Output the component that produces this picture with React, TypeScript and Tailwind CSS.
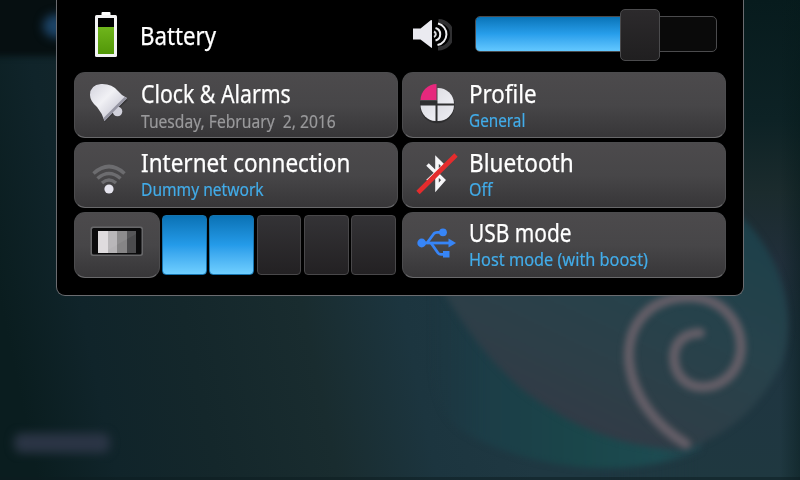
import React from "react";

const FONT = "font-['Noto_Sans','Open_Sans',sans-serif]";

function Wallpaper() {
  return (
    <svg className="absolute inset-0" width="800" height="480" viewBox="0 0 800 480" aria-hidden="true">
      <defs>
        <linearGradient id="base" gradientUnits="userSpaceOnUse" x1="0" y1="300" x2="480" y2="200">
          <stop offset="0" stopColor="#0a1d1f" />
          <stop offset="0.16" stopColor="#10242a" />
          <stop offset="0.36" stopColor="#14272b" />
          <stop offset="0.6" stopColor="#192c2f" />
          <stop offset="0.8" stopColor="#1c353f" />
          <stop offset="1" stopColor="#1f3842" />
        </linearGradient>
        <linearGradient id="right" x1="0" y1="0" x2="0" y2="1">
          <stop offset="0" stopColor="#071b1d" />
          <stop offset="0.25" stopColor="#0d2225" />
          <stop offset="0.4" stopColor="#1b2b2d" />
          <stop offset="0.55" stopColor="#212f3b" />
          <stop offset="0.75" stopColor="#1f3541" />
          <stop offset="1" stopColor="#1f3840" />
        </linearGradient>
        <linearGradient id="fadeLeft" x1="0" y1="0" x2="1" y2="0">
          <stop offset="0" stopColor="#fff" stopOpacity="0" />
          <stop offset="0.5" stopColor="#fff" />
        </linearGradient>
        <mask id="rightMask"><rect x="600" width="200" height="480" fill="url(#fadeLeft)" /></mask>
        <linearGradient id="edge" x1="0" y1="0" x2="1" y2="0">
          <stop offset="0" stopColor="#061a1b" stopOpacity="0" />
          <stop offset="1" stopColor="#061a1b" stopOpacity="0.45" />
        </linearGradient>
        <linearGradient id="teal" gradientUnits="userSpaceOnUse" x1="430" y1="0" x2="700" y2="0">
          <stop offset="0" stopColor="#1c3a44" stopOpacity="0" />
          <stop offset="0.2" stopColor="#1c3d47" />
          <stop offset="0.55" stopColor="#1a464a" />
          <stop offset="0.85" stopColor="#1d4b51" />
          <stop offset="1" stopColor="#24434d" />
        </linearGradient>
        <linearGradient id="disc" gradientUnits="userSpaceOnUse" x1="720" y1="200" x2="600" y2="450">
          <stop offset="0" stopColor="#1c404a" />
          <stop offset="0.45" stopColor="#27424b" />
          <stop offset="0.75" stopColor="#2d3f48" />
          <stop offset="1" stopColor="#333a46" />
        </linearGradient>
        <filter id="soft" colorInterpolationFilters="sRGB" x="-30%" y="-30%" width="160%" height="160%"><feGaussianBlur stdDeviation="3" /></filter>
        <filter id="glow" colorInterpolationFilters="sRGB" x="-50%" y="-50%" width="200%" height="200%"><feGaussianBlur stdDeviation="5" /></filter>
      </defs>
      <rect width="800" height="480" fill="url(#base)" />
      <rect x="600" width="200" height="480" fill="url(#right)" mask="url(#rightMask)" />
      <rect x="780" width="20" height="480" fill="url(#edge)" />
      <rect x="-20" y="-20" width="120" height="76" fill="#060f11" filter="url(#soft)" />
      <ellipse cx="57" cy="26" rx="14" ry="12" fill="#1c4366" filter="url(#glow)" />
      <path d="M430 280C430 350 425 405 462 431C520 466 625 484 700 450L720 300Z" fill="url(#teal)" filter="url(#soft)" />
      <path d="M420 240C450 320 500 371 523 390C570 425 610 445 680 450C730 438 765 400 781 364C796 325 788 260 738 214L640 160Z" fill="url(#disc)" filter="url(#soft)" />
      <path d="M686 444C656 426 632 396 629 360C627 324 650 298 688 297C722 297 741 322 741 348C740 373 720 388 701 387C683 386 674 372 674 357C674 343 684 333 700 333" fill="none" stroke="#645e67" strokeWidth="10" strokeLinecap="round" filter="url(#soft)" />
      <rect x="14" y="433" width="96" height="20" rx="8" fill="#2b3545" filter="url(#glow)" />
      <rect y="477" width="800" height="3" fill="#0c1c20" opacity="0.5" />
    </svg>
  );
}

function BatteryIcon() {
  return (
    <svg width="22" height="46" viewBox="0 0 22 46" aria-hidden="true">
      <defs>
        <linearGradient id="charge" x1="0" y1="0" x2="0" y2="1">
          <stop offset="0" stopColor="#6fb51c" />
          <stop offset="1" stopColor="#529708" />
        </linearGradient>
      </defs>
      <rect x="6.500" y="0" width="9" height="5" rx="1" fill="#fff" />
      <rect x="0" y="3" width="22" height="42" rx="1.500" fill="#f3f3f4" />
      <rect x="3" y="6" width="16" height="36" fill="#000" />
      <rect x="3" y="15" width="16" height="27" fill="url(#charge)" />
    </svg>
  );
}

function SpeakerIcon() {
  return (
    <svg width="40" height="36" viewBox="412 16 40 36" fill="none" aria-hidden="true">
      <path d="M413 28.500H420.500L431 20Q432 19.500 432 21V47Q432 48.500 431 47.500L420.500 39.500H413Z" fill="#eaeaf0" />
      <path d="M438.500 21A13.500 13.500 0 0 1 438 48.500" stroke="#303032" strokeWidth="4" />
      <path d="M438 23.500A11 11 0 0 1 437.500 45" stroke="#ededf0" strokeWidth="2" />
      <path d="M435.500 28A6.500 6.500 0 0 1 435.500 40.500" stroke="#ededf0" strokeWidth="2" />
      <path d="M434 31.500A3 3 0 0 1 434 37" stroke="#dedee2" strokeWidth="2" />
    </svg>
  );
}

function BellIcon() {
  return (
    <svg width="44" height="44" viewBox="86 83 44 44" className="overflow-visible" aria-hidden="true">
      <defs>
        <linearGradient id="bell" x1="0" y1="0" x2="1" y2="1">
          <stop offset="0" stopColor="#d3d3dd" />
          <stop offset="0.4" stopColor="#f1f1f5" />
          <stop offset="0.75" stopColor="#cdcdd8" />
        </linearGradient>
      </defs>
      <path d="M91 97Q93 104 98 108Q103 114 105 122L128 100" fill="#2a2a2c" opacity="0.5" />
      <circle cx="117.500" cy="111.500" r="4.800" fill="#d0d0da" />
      <path d="M90 95Q90 85 101 84Q112 83.500 118 91Q121 95 127 98L104.500 121Q102 113 97 107Q90 101 90 95Z" fill="url(#bell)" />
      <path d="M124.500 97L127 98L104.500 121L103.500 118Z" fill="#9696a3" />
    </svg>
  );
}

function ProfileIcon() {
  return (
    <svg width="44" height="44" viewBox="414 83 44 44" aria-hidden="true">
      <defs>
        <linearGradient id="quarter" x1="0" y1="0" x2="1" y2="1">
          <stop offset="0" stopColor="#dedee4" />
          <stop offset="1" stopColor="#efeff4" />
        </linearGradient>
      </defs>
      <path d="M420 100V105A17 17 0 1 0 454.500 105V100Z" fill="#29292b" transform="translate(0 1)" opacity="0.8" />
      <path d="M437.500 103.500V88A16 16 0 0 1 454 103.500Z" fill="url(#quarter)" />
      <path d="M437.500 105.500H454A16 16 0 0 1 437.500 121Z" fill="url(#quarter)" />
      <path d="M435.500 105.500H420.500A16 16 0 0 0 435.500 121Z" fill="url(#quarter)" />
      <path d="M436.500 100V84A16.500 16.500 0 0 0 420.500 100Z" fill="#e7287d" />
    </svg>
  );
}

function WifiIcon() {
  return (
    <svg width="44" height="44" viewBox="86 153 44 44" fill="none" aria-hidden="true">
      <g stroke="#6c6c6f" strokeWidth="3.600">
        <path d="M93.500 173.500Q109 159.500 124.500 173.500" />
        <path d="M97.500 178.500Q109 168.500 120.500 178.500" />
        <path d="M102 183Q109 177 116 183" />
      </g>
      <circle cx="109" cy="189" r="4.600" fill="#e5e4ee" />
    </svg>
  );
}

function BluetoothOffIcon() {
  return (
    <svg width="44" height="44" viewBox="414 153 44 44" fill="none" aria-hidden="true">
      <path d="M427.500 164.500L443.500 180L437 187.500V159.500L443.500 166L427.500 181" stroke="#f6f6f8" strokeWidth="3.600" />
      <path d="M418 192.500L456 155" stroke="#e42c2d" strokeWidth="4.700" />
    </svg>
  );
}

function UsbIcon() {
  return (
    <svg width="44" height="44" viewBox="414 223 44 44" fill="none" aria-hidden="true">
      <g stroke="#3785f7" strokeWidth="2.800">
        <path d="M421 243H450" />
        <path d="M427 243L434 233.500Q435 232.300 437 232.300H442" />
        <path d="M431 243L438 253Q439 254.300 441 254.300H445" />
      </g>
      <circle cx="421.700" cy="243" r="4.400" fill="#3785f7" />
      <circle cx="443" cy="232.300" r="3.900" fill="#3785f7" />
      <rect x="443" y="251" width="6.500" height="6.500" fill="#3785f7" />
      <path d="M448.500 238.500L456 243L448.500 247.500Z" fill="#3785f7" />
    </svg>
  );
}

function DisplayIcon() {
  return (
    <svg width="54" height="32" viewBox="90 227 54 32" className="overflow-visible" aria-hidden="true">
      <rect x="90.500" y="226.500" width="52.500" height="29.500" rx="2.500" fill="#68686a" />
      <rect x="92" y="228" width="49.500" height="26.500" rx="1.500" fill="#0b0b0c" />
      <rect x="98" y="231" width="10" height="22" fill="#dfdcde" />
      <rect x="108" y="231" width="9" height="22" fill="#b5b3b5" />
      <rect x="117" y="231" width="10" height="22" fill="#868586" />
      <rect x="127" y="231" width="9" height="22" fill="#4c4c4e" />
      <path d="M108 250L136 234V231H108Z" fill="#fff" opacity="0.060" />
    </svg>
  );
}

type TileProps = {
  icon: React.ReactNode;
  title: string;
  value: string;
  titleScale: string;
  valueScale: string;
  muted?: boolean;
  lowered?: boolean;
};

const tileSkin =
  "rounded-[11px] border border-[#4c4c4e] border-b-[#69696b] bg-linear-to-b from-[#4c4a4c] via-[#474648] to-[#373638]";

function Tile({ icon, title, value, titleScale, valueScale, muted, lowered }: TileProps) {
  return (
    <button className={`flex h-[66px] w-[324px] items-start text-left ${tileSkin}`}>
      <span className="flex h-full w-[66px] shrink-0 items-center justify-center">{icon}</span>
      <span className={`flex flex-col whitespace-pre ${lowered ? "pt-[4px]" : "pt-[3px]"}`}>
        <span className={`h-[32px] origin-left text-[25px] leading-[32px] text-white [-webkit-text-stroke:0.25px] ${titleScale}`}>{title}</span>
        <span className={`h-[24px] origin-left text-[18px] leading-[24px] [-webkit-text-stroke:0.2px] ${valueScale} ${muted ? "text-[#99999b]" : "-mt-px text-[#42ace9]"}`}>
          {value}
        </span>
      </span>
    </button>
  );
}

function Brightness() {
  return (
    <div className="flex h-[66px] w-[324px] items-center">
      <div className={`flex h-[66px] w-[86px] items-center justify-center pb-1 ${tileSkin}`}>
        <DisplayIcon />
      </div>
      <div className="ml-[2px] flex gap-[2.500px]">
        {[0, 1, 2, 3, 4].map((step) => (
          <div
            key={step}
            className={`h-[60px] w-[44.800px] rounded-[4px] border bg-linear-to-b ${
              step < 2 ? "border-[#1673ad] from-[#0a72b5] via-[#249be9] to-[#6fcfff]" : "border-[#49484a] from-[#343336] to-[#232123]"
            }`}
          />
        ))}
      </div>
    </div>
  );
}

function VolumeSlider() {
  return (
    <div className="relative flex h-[36px] w-[242px] rounded-[5px] border border-[#4b4b4d] bg-[#0a0a0a]">
      <div className="h-full w-[148px] rounded-l-[4px] bg-linear-to-b from-[#0874b8] via-[#279eeb] to-[#62c8ff]" />
      <div className="absolute top-[-8px] left-[144px] h-[52px] w-[40px] rounded-[5px] border border-[#4b4b4d] bg-linear-to-b from-[#2c2a2c] to-[#201f20]" />
    </div>
  );
}

export default function App() {
  return (
    <main className={`relative h-[480px] w-[800px] overflow-hidden bg-[#10242a] ${FONT}`}>
      <Wallpaper />
      <section className="relative mx-auto flex h-[296px] w-[688px] flex-col rounded-b-[9px] border border-t-0 border-[#6b6c70] bg-black px-[17px]">
        <header className="flex h-[72px] shrink-0 items-start">
          <div className="flex w-[338px] items-start pl-[21px]">
            <div className="mt-3"><BatteryIcon /></div>
            <span className="mt-[19px] ml-[23px] origin-left scale-x-[0.890] text-[25px] leading-[32px] text-white [-webkit-text-stroke:0.25px]">Battery</span>
          </div>
          <div className="mt-4"><SpeakerIcon /></div>
          <div className="mt-4 ml-[23px]"><VolumeSlider /></div>
        </header>
        <div className="grid grid-cols-[324px_324px] gap-1">
          <Tile icon={<BellIcon />} title="Clock & Alarms" value="Tuesday, February  2, 2016" titleScale="scale-x-[0.850]" valueScale="scale-x-[0.868]" muted lowered />
          <Tile icon={<ProfileIcon />} title="Profile" value="General" titleScale="scale-x-[0.895]" valueScale="scale-x-[0.850]" lowered />
          <Tile icon={<WifiIcon />} title="Internet connection" value="Dummy network" titleScale="scale-x-[0.900]" valueScale="scale-x-[0.866]" />
          <Tile icon={<BluetoothOffIcon />} title="Bluetooth" value="Off" titleScale="scale-x-[0.902]" valueScale="scale-x-[0.890]" />
          <Brightness />
          <Tile icon={<UsbIcon />} title="USB mode" value="Host mode (with boost)" titleScale="scale-x-[0.836]" valueScale="scale-x-[0.906]" />
        </div>
      </section>
    </main>
  );
}
